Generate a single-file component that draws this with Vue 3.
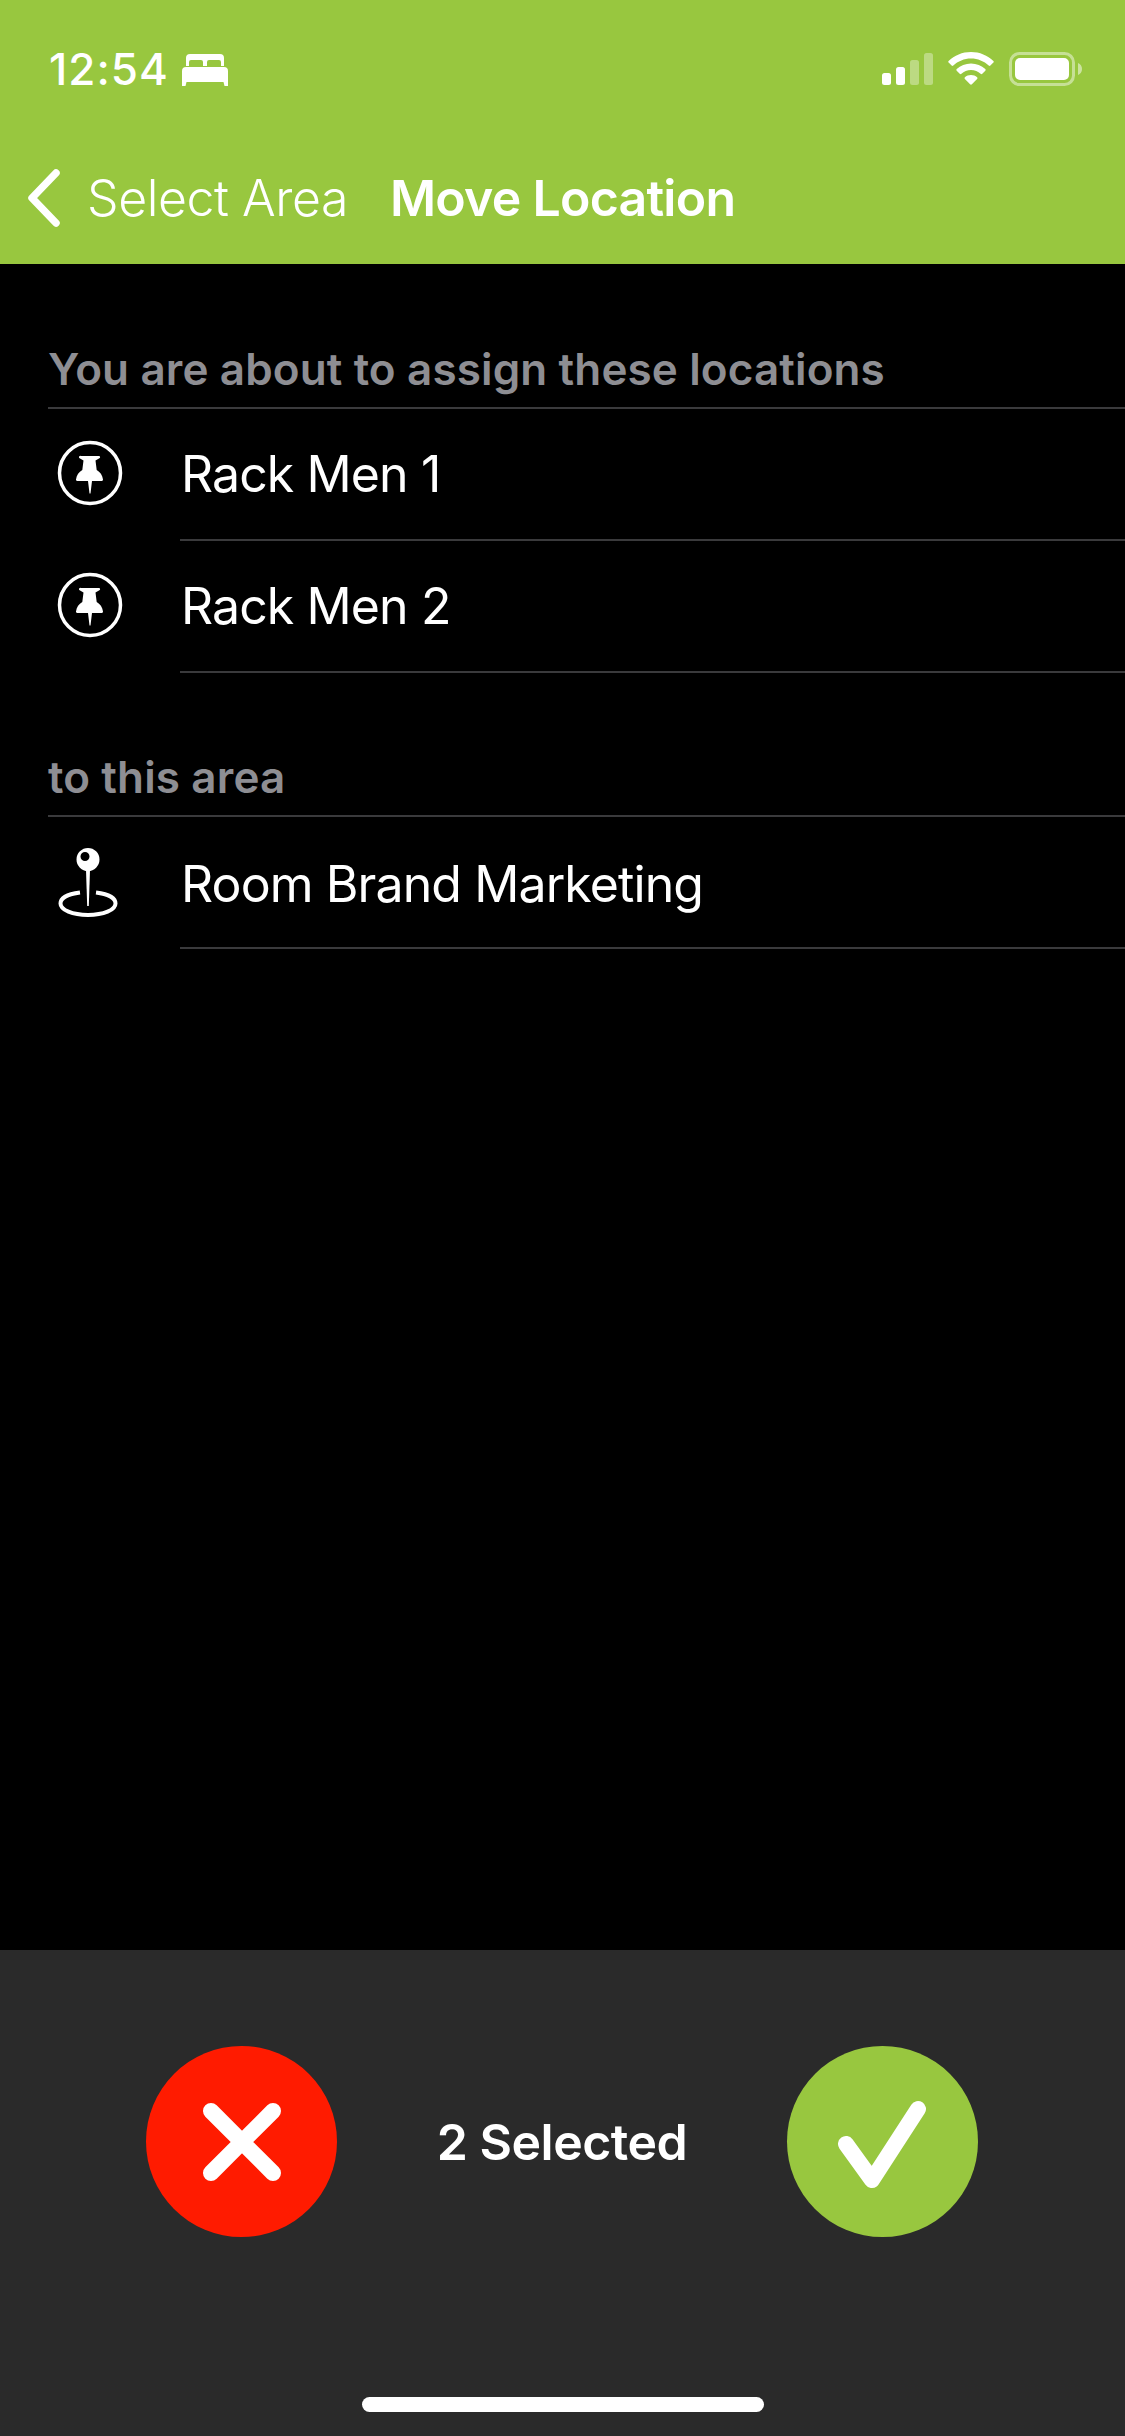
<script setup>
const assigned = ["Rack Men 1", "Rack Men 2"];
</script>

<template>
  <div class="screen">
    <!-- Header -->
    <header class="top">
      <div class="status">
        <div class="status-left">
          <span class="time">12:54</span>
          <svg class="bed" width="46" height="32" viewBox="0 0 46 32">
            <path fill="#fff" fill-rule="evenodd" d="M8 0h30a4 4 0 0 1 4 4v8h-3V8a2 2 0 0 0-2-2H27a2 2 0 0 0-2 2v4h-4V8a2 2 0 0 0-2-2H9a2 2 0 0 0-2 2v4H4V4a4 4 0 0 1 4-4z" />
            <path fill="#fff" d="M4 13h38a4 4 0 0 1 4 4v15h-3.500l-1-4H4.500l-1 4H0V17a4 4 0 0 1 4-4z" />
          </svg>
        </div>
        <div class="status-right">
          <div class="signal">
            <span class="bar b1"></span>
            <span class="bar b2"></span>
            <span class="bar b3"></span>
            <span class="bar b4"></span>
          </div>
          <svg width="46" height="33" viewBox="0 0 46 33">
            <path fill="#fff" d="M23 0c8.700 0 16.600 3.400 22.400 8.900.5.500.5 1.200 0 1.700l-3 3c-.5.500-1.200.5-1.700 0C36 9.300 29.800 6.600 23 6.600S10 9.300 5.300 13.600c-.5.500-1.200.5-1.700 0l-3-3c-.5-.5-.5-1.200 0-1.700C6.400 3.400 14.300 0 23 0z" />
            <path fill="#fff" d="M23 11.500c5.500 0 10.500 2.100 14.300 5.600.5.500.5 1.200 0 1.700l-3 3c-.5.500-1.200.5-1.700 0-2.500-2.300-5.900-3.700-9.600-3.700s-7.100 1.400-9.600 3.700c-.5.500-1.200.5-1.700 0l-3-3c-.5-.5-.5-1.200 0-1.700 3.800-3.500 8.800-5.600 14.300-5.600z" />
            <path fill="#fff" d="M23 23c2.400 0 4.500.9 6.100 2.300.5.500.5 1.200 0 1.700l-5.200 5.300c-.5.500-1.300.5-1.800 0L16.900 27c-.5-.5-.5-1.200 0-1.700C18.500 23.900 20.600 23 23 23z" />
          </svg>
          <svg class="battery" width="73" height="34" viewBox="0 0 73 34">
            <rect x="1.500" y="1.500" width="63" height="31" rx="9" fill="none" stroke="#fff" stroke-opacity="0.45" stroke-width="3" />
            <rect x="6" y="6" width="54" height="22" rx="5" fill="#fff" />
            <path fill="#fff" fill-opacity="0.5" d="M69 11c2.500 1 4 3.300 4 6s-1.500 5-4 6z" />
          </svg>
        </div>
      </div>
      <nav class="nav">
        <svg class="chevron" width="34" height="58" viewBox="0 0 34 58">
          <path d="M29 4 5 29l24 25" fill="none" stroke="#fff" stroke-width="7.500" stroke-linecap="round" stroke-linejoin="round" />
        </svg>
        <span class="back">Select Area</span>
        <span class="title">Move Location</span>
      </nav>
    </header>

    <!-- Body -->
    <main class="content">
      <section class="group">
        <h2 class="group-label">You are about to assign these locations</h2>
        <div v-for="name in assigned" :key="name" class="row">
          <div class="row-icon">
            <svg width="66" height="66" viewBox="0 0 66 66">
              <circle cx="33" cy="33" r="30.500" fill="none" stroke="#fff" stroke-width="3.500" />
              <path fill="#fff" d="M24 16h18a1.200 1.200 0 0 1 .4 2.300L38.500 20.500l1.200 9.500c3.300 1.800 5.800 5.200 6.300 9.600.1.800-.4 1.400-1.200 1.400H35l-1.500 12.500h-1L31 41H20.200c-.8 0-1.300-.6-1.200-1.400.5-4.400 3-7.800 6.300-9.600l1.200-9.500-3.900-2.200A1.200 1.200 0 0 1 24 16z" />
            </svg>
          </div>
          <div class="row-text">{{ name }}</div>
        </div>
      </section>

      <section class="group place">
        <h2 class="group-label">to this area</h2>
        <div class="row">
          <div class="row-icon">
            <svg width="62" height="70" viewBox="0 0 62 70">
              <path fill="#fff" fill-rule="evenodd" d="M31 0a11.500 11.500 0 1 1 0 23 11.500 11.500 0 0 1 0-23zm-3 4a4.500 4.500 0 1 0 0 9 4.500 4.500 0 0 0 0-9z" />
              <path fill="#fff" d="M29 22h4l-1.200 36h-1.600z" />
              <path fill="none" stroke="#fff" stroke-width="4" d="M23 44.500C11 46 3.500 50 3.500 55.500 3.500 62 15.500 67 31 67s27.500-5 27.500-11.500c0-5.500-7.500-9.500-19.500-11" />
            </svg>
          </div>
          <div class="row-text">Room Brand Marketing</div>
        </div>
      </section>
    </main>

    <!-- Footer -->
    <footer class="bottom">
      <div class="actions">
        <button class="round cancel">
          <svg width="96" height="96" viewBox="0 0 96 96">
            <path d="M17 17l62 62M79 17 17 79" fill="none" stroke="#fff" stroke-width="16" stroke-linecap="round" />
          </svg>
        </button>
        <span class="count">2 Selected</span>
        <button class="round confirm">
          <svg width="96" height="96" viewBox="0 0 96 96">
            <path d="M12 50l26 36 46-71" fill="none" stroke="#fff" stroke-width="16" stroke-linecap="round" stroke-linejoin="round" />
          </svg>
        </button>
      </div>
      <div class="home-bar"></div>
    </footer>
  </div>
</template>

<style>
html,
body {
  margin: 0;
  background: #000;
}
</style>

<style scoped>
.screen {
  width: 1125px;
  height: 2436px;
  display: flex;
  flex-direction: column;
  background: #000;
  color: #fff;
  font-family: Inter, "Noto Sans", sans-serif;
  overflow: hidden;
}

.top {
  height: 264px;
  flex: none;
  background: #98c73f;
}

.status {
  height: 132px;
  display: flex;
  justify-content: space-between;
  padding: 52px 43px 0 49px;
  box-sizing: border-box;
}

.status-left {
  display: flex;
  align-items: center;
  height: 34px;
  gap: 13px;
}

.time {
  font-size: 44px;
  font-weight: 500;
  line-height: 34px;
  letter-spacing: 1px;
}

.bed {
  margin-top: 1px;
}

.status-right {
  display: flex;
  align-items: flex-start;
}

.signal {
  display: flex;
  align-items: flex-end;
  gap: 5px;
  height: 33px;
  margin-right: 15px;
}

.bar {
  width: 9px;
  background: #fff;
  border-radius: 2.500px;
}

.b1 {
  height: 12px;
}

.b2 {
  height: 18px;
}

.b3 {
  height: 25px;
  opacity: 0.35;
}

.b4 {
  height: 32px;
  opacity: 0.35;
}

.battery {
  margin-left: 15px;
}

.nav {
  height: 132px;
  display: flex;
  align-items: center;
  padding-left: 27px;
  box-sizing: border-box;
}

.chevron {
  flex: none;
  margin-right: 26px;
}

.back {
  font-size: 50px;
  font-weight: 300;
  letter-spacing: -0.45px;
  margin-right: 42px;
}

.title {
  font-size: 50px;
  font-weight: 600;
  letter-spacing: -0.75px;
}

.content {
  flex: 1;
}

.group {
  padding-left: 48px;
  margin-top: 51px;
}

.group.place {
  margin-top: 50px;
}

.group-label {
  margin: 0;
  height: 94px;
  line-height: 50px;
  font-size: 44px;
  font-weight: 600;
  letter-spacing: 0.13px;
  color: #8e8e93;
  border-bottom: 2px solid #3a3a3c;
  box-sizing: border-box;
  display: flex;
  align-items: flex-end;
  padding-bottom: 13px;
}

.row {
  display: flex;
  align-items: stretch;
  height: 132px;
}

.row-icon {
  width: 132px;
  flex: none;
  display: flex;
  align-items: center;
  padding: 0 0 4px 9px;
  box-sizing: border-box;
}

.row-text {
  flex: 1;
  display: flex;
  align-items: center;
  padding-left: 1px;
  font-size: 50px;
  font-weight: 400;
  letter-spacing: -0.9px;
  border-bottom: 2px solid #3a3a3c;
}

.place .row-icon {
  padding-bottom: 0;
}

.place .row-text {
  padding-top: 3px;
}

.bottom {
  flex: none;
  height: 486px;
  background: #2a2a2a;
  display: flex;
  flex-direction: column;
  align-items: center;
}

.actions {
  margin-top: 96px;
  margin-right: 1px;
  width: 832px;
  display: flex;
  align-items: center;
  justify-content: space-between;
}

.round {
  width: 191px;
  height: 191px;
  border: none;
  border-radius: 50%;
  padding: 0;
  display: flex;
  align-items: center;
  justify-content: center;
}

.cancel {
  background: #ff1b00;
}

.confirm {
  background: #98c73f;
}

.count {
  font-size: 50px;
  font-weight: 600;
  letter-spacing: -0.5px;
}

.home-bar {
  margin-top: 160px;
  width: 402px;
  height: 15px;
  border-radius: 8px;
  background: #fff;
}
</style>
